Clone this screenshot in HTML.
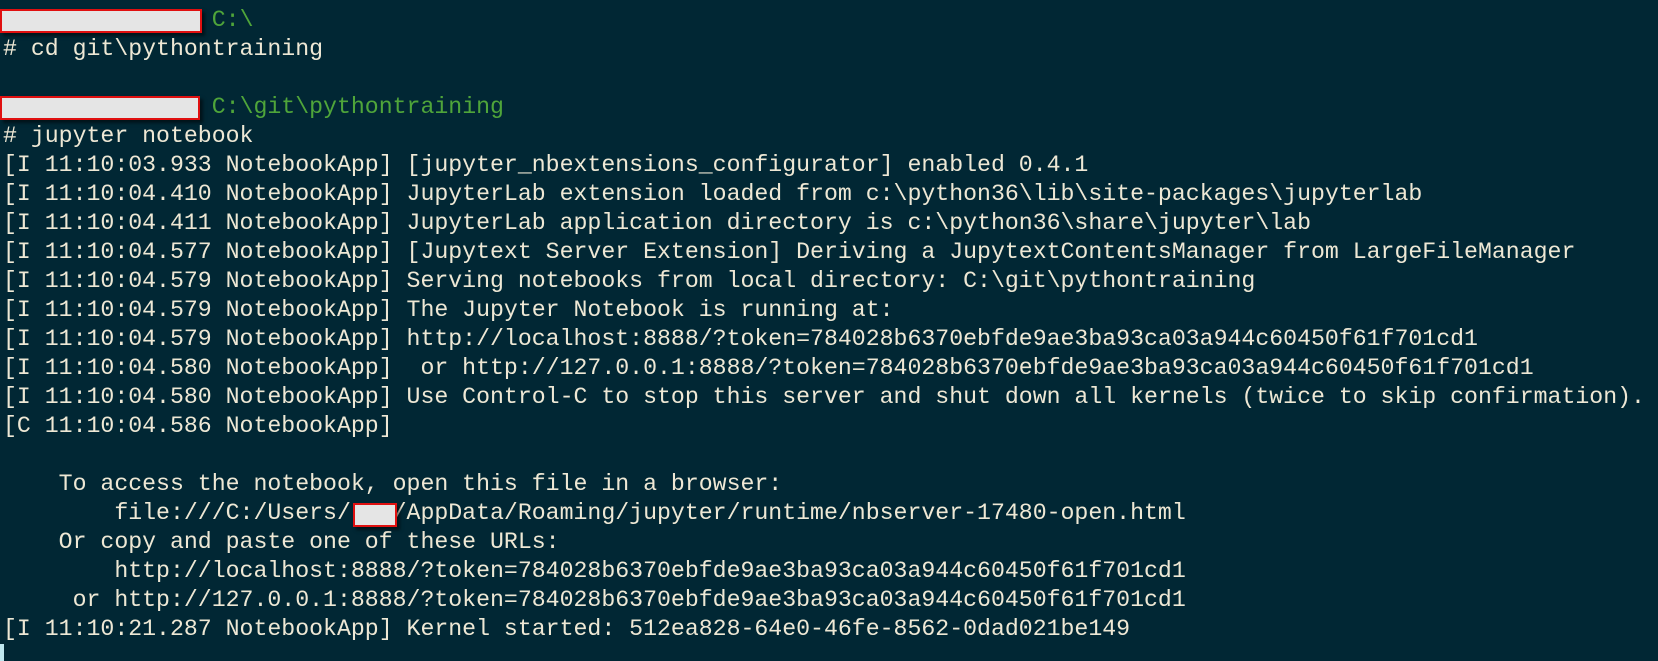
<!DOCTYPE html>
<html><head><meta charset="utf-8"><style>
html,body{margin:0;padding:0;width:1658px;height:661px;overflow:hidden;background:#012734;}
pre{position:absolute;left:3px;top:6px;margin:0;font-family:"Liberation Mono",monospace;font-size:23.2px;line-height:29px;color:#eee8d5;white-space:pre;}
.g{color:#4fa53a;}
.box{position:absolute;background:#e5e5e5;border:2px solid #e01010;box-sizing:border-box;box-shadow:3px 3px 3px rgba(0,0,0,0.5);}
.cur{position:absolute;left:0;top:644px;width:4px;height:17px;background:#bfe8f0;}
</style></head><body>
<pre>               <span class="g">C:\</span>
# cd git\pythontraining

               <span class="g">C:\git\pythontraining</span>
# jupyter notebook
[I 11:10:03.933 NotebookApp] [jupyter_nbextensions_configurator] enabled 0.4.1
[I 11:10:04.410 NotebookApp] JupyterLab extension loaded from c:\python36\lib\site-packages\jupyterlab
[I 11:10:04.411 NotebookApp] JupyterLab application directory is c:\python36\share\jupyter\lab
[I 11:10:04.577 NotebookApp] [Jupytext Server Extension] Deriving a JupytextContentsManager from LargeFileManager
[I 11:10:04.579 NotebookApp] Serving notebooks from local directory: C:\git\pythontraining
[I 11:10:04.579 NotebookApp] The Jupyter Notebook is running at:
[I 11:10:04.579 NotebookApp] http://localhost:8888/?token=784028b6370ebfde9ae3ba93ca03a944c60450f61f701cd1
[I 11:10:04.580 NotebookApp]  or http://127.0.0.1:8888/?token=784028b6370ebfde9ae3ba93ca03a944c60450f61f701cd1
[I 11:10:04.580 NotebookApp] Use Control-C to stop this server and shut down all kernels (twice to skip confirmation).
[C 11:10:04.586 NotebookApp]

    To access the notebook, open this file in a browser:
        file:///C:/Users/   /AppData/Roaming/jupyter/runtime/nbserver-17480-open.html
    Or copy and paste one of these URLs:
        http://localhost:8888/?token=784028b6370ebfde9ae3ba93ca03a944c60450f61f701cd1
     or http://127.0.0.1:8888/?token=784028b6370ebfde9ae3ba93ca03a944c60450f61f701cd1
[I 11:10:21.287 NotebookApp] Kernel started: 512ea828-64e0-46fe-8562-0dad021be149
</pre>
<div class="box" style="left:353px;top:503px;width:44px;height:24px;"></div>
<div class="box" style="left:0;top:9px;width:202px;height:24px;"></div>
<div class="box" style="left:0;top:96px;width:200px;height:24px;"></div>
<div class="cur"></div>
</body></html>
